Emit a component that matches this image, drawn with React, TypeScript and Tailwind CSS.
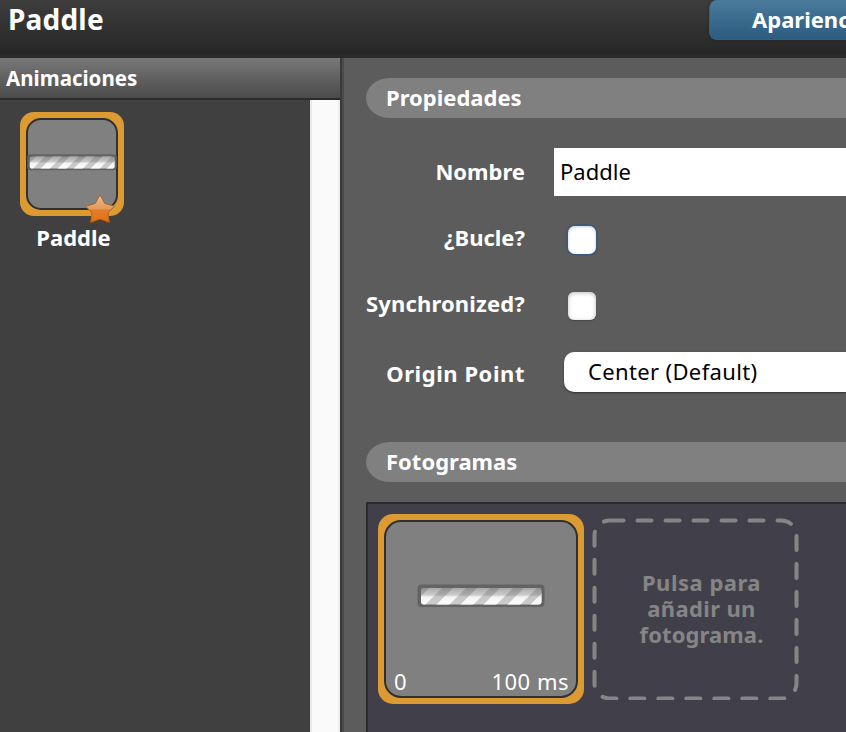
import React from "react";

function Paddle({ className, id }: { className: string; id: string }) {
  return (
    <svg className={className} viewBox="0 0 128 24" preserveAspectRatio="none">
      <defs>
        <clipPath id={id}>
          <rect x="4" y="4" width="120.5" height="16.5" rx="3" />
        </clipPath>
        <filter id={`${id}-soft`} x="-5%" y="-20%" width="110%" height="140%">
          <feGaussianBlur stdDeviation="0.7" />
        </filter>
        <linearGradient id={`${id}-shade`} x1="0" y1="0" x2="0" y2="1">
          <stop offset="0" stopColor="#606060" stopOpacity=".6" />
          <stop offset=".45" stopColor="#606060" stopOpacity=".32" />
          <stop offset=".55" stopColor="#707070" stopOpacity=".08" />
          <stop offset="1" stopColor="#707070" stopOpacity="0" />
        </linearGradient>
      </defs>
      <g filter={`url(#${id}-soft)`}>
        <rect x="0.5" y="0.5" width="127" height="22.5" rx="4" fill="#646464" />
      </g>
      <g clipPath={`url(#${id})`}>
        <rect x="0" y="0" width="128" height="24" fill="#cecece" />
        <g filter={`url(#${id}-soft)`}>
          <path
            d="M-8 24L16 0h13L5 24ZM16 24L40 0h13L29 24ZM40 24L64 0h13L53 24ZM63 24L87 0h13L76 24ZM87 24L111 0h13L100 24ZM110 24L134 0h13L123 24Z"
            fill="#fff"
          />
        </g>
        <rect x="0" y="2" width="128" height="20" fill={`url(#${id}-shade)`} />
      </g>
    </svg>
  );
}

function Star() {
  return (
    <svg className="absolute left-[64px] top-[81px] h-[32px] w-[32px]" viewBox="0 0 32 32">
      <defs>
        <linearGradient id="star" x1="0" y1="0" x2="0" y2="1">
          <stop offset="0" stopColor="#e8bd98" />
          <stop offset=".5" stopColor="#e39a5d" />
          <stop offset=".56" stopColor="#e17c2c" />
          <stop offset="1" stopColor="#e8700c" />
        </linearGradient>
      </defs>
      <ellipse cx="16" cy="29.5" rx="10.5" ry="1.8" fill="#6b3a18" opacity=".6" />
      <path
        d="M16 1.8L20.8 10.5L30.5 13.2L24 19.8L25.3 29.3L16 26L6.700 29.3L8 19.8L1.500 13.2L11.200 10.5Z"
        fill="url(#star)"
        stroke="#a8642f"
        strokeWidth="1"
        strokeLinejoin="round"
      />
    </svg>
  );
}

function Section({ children }: { children: React.ReactNode }) {
  return (
    <h2 className="flex h-10 items-center rounded-l-[24px_20px] bg-[#808080] pb-0.5 pl-5 text-[22px] font-bold">
      {children}
    </h2>
  );
}

function Label({ children, className = "pb-0.5" }: { children: React.ReactNode; className?: string }) {
  return (
    <label className={`flex h-full w-[159px] shrink-0 items-center justify-end whitespace-nowrap text-[22px] font-bold leading-[30px] ${className}`}>
      {children}
    </label>
  );
}

export default function App() {
  return (
    <div className="flex h-[732px] w-[846px] flex-col overflow-hidden bg-[#5c5c5c] font-['Noto_Sans',sans-serif] text-white">
      <header className="flex h-[58px] shrink-0 items-start justify-between border-b-4 border-[#2b2b2b] bg-linear-to-b from-[#3d3d3d] to-[#272727]">
        <h1 className="pl-2 text-[28px] font-bold leading-[38px] tracking-[0.2px]">Paddle</h1>
        <button className="h-10 w-[137px] shrink-0 overflow-hidden whitespace-nowrap rounded-l-lg border-b border-l border-[#34627f] bg-linear-to-b from-[#4a7b9b] to-[#2c5c80] pl-[42px] text-left text-[22px] font-bold leading-[39px] shadow-[0_0_3px_#222]">
          Apariencia
        </button>
      </header>

      <div className="flex min-h-0 flex-1">
        <aside className="flex w-[340px] shrink-0 flex-col">
          <h2 className="flex h-[42px] shrink-0 items-center border-b-2 border-[#2b2b2b] bg-linear-to-b from-[#787878] to-[#4b4b4b] pl-[6px] pt-px text-[20.5px] font-bold">
            Animaciones
          </h2>
          <div className="flex min-h-0 flex-1">
            <div className="flex-1 bg-[#404040] pl-5 pt-3">
              <div className="relative h-[104px] w-[104px] rounded-[14px] bg-[#dc9a33] p-[6px]">
                <div className="flex h-full items-center justify-center rounded-[15px] border-2 border-[#303030] bg-[#808080]">
                  <Paddle id="thumb" className="-mt-[3px] h-[17px] w-[90px] shrink-0" />
                </div>
                <Star />
              </div>
              <div className="w-[107px] pt-[6px] text-center text-[22px] font-bold leading-[30px]">Paddle</div>
            </div>
            <div className="w-[30px] border-x-2 border-l-[#e8e8e8] border-r-[#eeeeee] bg-[#fafafa]" />
          </div>
        </aside>
        <div className="w-1 shrink-0 border-r-2 border-[#4b4b4b] bg-[#3a3a3a]" />

        <main className="flex min-w-0 flex-1 flex-col pl-[22px] pt-5">
          <Section>Propiedades</Section>
          <div className="mt-[30px] flex h-12 items-center">
            <Label>Nombre</Label>
            <div className="ml-[29px] flex h-12 flex-1 items-center bg-white pb-0.5 pl-[6px] text-[22px] text-black">Paddle</div>
          </div>
          <div className="mt-[26px] flex h-9 items-center">
            <Label className="pb-1.5">¿Bucle?</Label>
            <div className="ml-[43px] h-7 w-7 rounded-[7px] bg-white shadow-[0_0_0_2px_#405879,inset_0_1px_3px_#ccc]" />
          </div>
          <div className="mt-[30px] flex h-9 items-center">
            <Label className="pb-1.5 tracking-[0.15px]">Synchronized?</Label>
            <div className="ml-[43px] h-7 w-7 rounded-[6px] bg-white shadow-[0_1px_1px_#484848,inset_0_1px_4px_#bbb]" />
          </div>
          <div className="mt-[28px] flex h-10 items-center">
            <Label className="pt-0.5 tracking-[0.55px]">Origin Point</Label>
            <div className="ml-[39px] flex h-10 flex-1 items-center rounded-l-[10px] bg-white pb-0.5 pl-6 text-[22px] tracking-[0.35px] text-black shadow-[0_1px_2px_#333]">
              Center (Default)
            </div>
          </div>
          <div className="mt-[50px]">
            <Section>Fotogramas</Section>
          </div>
          <div className="mt-5 flex flex-1 items-start border-l-2 border-t-2 border-[#2c2c2c] bg-[#41404a] pl-[10px] pt-[10px]">
            <div className="h-[190px] w-[206px] shrink-0 rounded-[15px] bg-[#dc9a33] p-[6px]">
              <div className="flex h-full flex-col items-center rounded-[17px] border-2 border-[#303030] bg-[#808080] px-[8px]">
                <Paddle id="frame" className="-ml-px mt-[62px] h-[24px] w-[128px] shrink-0" />
                <div className="mt-[58px] flex w-full justify-between text-[22px] leading-[30px]">
                  <span>0</span>
                  <span className="-mr-px tracking-[0.5px]">100 ms</span>
                </div>
              </div>
            </div>
            <div className="relative ml-2 mt-1 flex h-[182px] w-[208px] shrink-0 items-center justify-center pb-0.5 pl-[11px]">
              <svg className="absolute inset-0 h-[182px] w-[208px]" viewBox="0 0 208 182">
                <path
                  d="M17.5 2.5H189.5A15 15 0 0 1 204.5 17.5V165.5A15 15 0 0 1 189.5 180.5H17.5A15 15 0 0 1 2.5 165.5V17.5A15 15 0 0 1 17.5 2.5"
                  fill="none"
                  stroke="#858585"
                  strokeWidth="4"
                  strokeLinecap="round"
                  strokeDasharray="14 14"
                />
              </svg>
              <p className="text-center text-[22px] font-bold leading-[26px] text-[#858585]">
                <span className="tracking-[0.5px]">Pulsa para</span>
                <br />
                <span className="tracking-[0.35px]">añadir un</span>
                <br />
                <span className="tracking-[0.1px]">fotograma.</span>
              </p>
            </div>
          </div>
        </main>
      </div>
    </div>
  );
}
